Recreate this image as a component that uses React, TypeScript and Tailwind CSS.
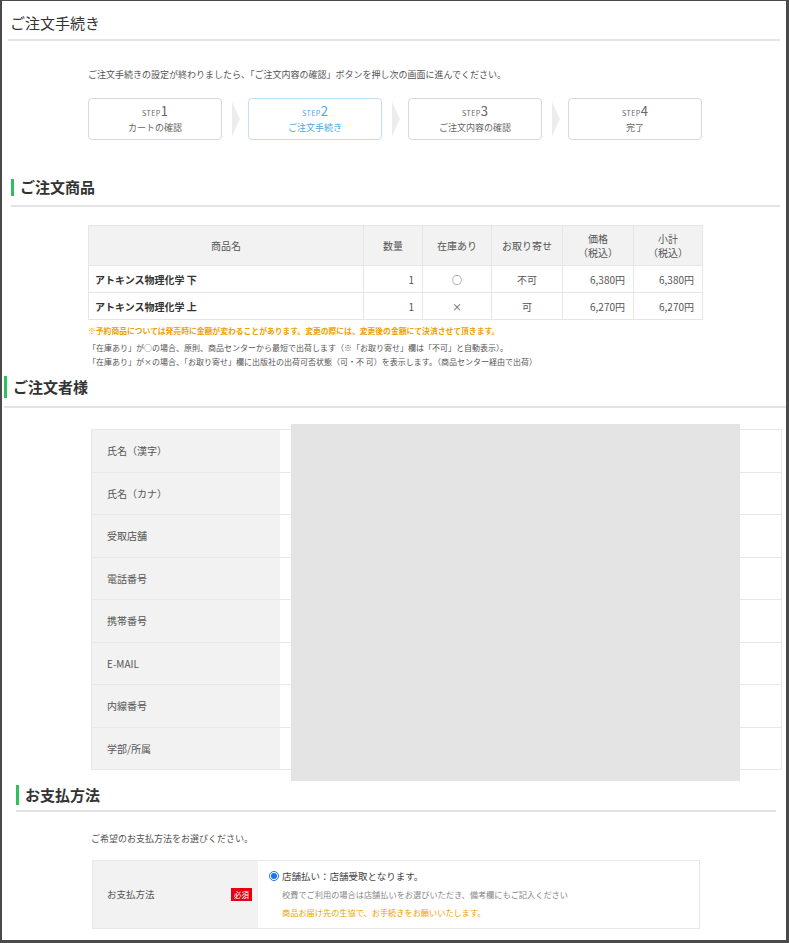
const steps = [
    { no: "1", label: "カートの確認", active: false },
    { no: "2", label: "ご注文手続き", active: true },
    { no: "3", label: "ご注文内容の確認", active: false },
    { no: "4", label: "完了", active: false },
];

const items = [
    { name: "アトキンス物理化学 下", qty: 1, stock: "○", order: "不可", price: "6,380円", sub: "6,380円" },
    { name: "アトキンス物理化学 上", qty: 1, stock: "×", order: "可", price: "6,270円", sub: "6,270円" },
];

const fields = ["氏名（漢字）", "氏名（カナ）", "受取店舗", "電話番号", "携帯番号", "E-MAIL", "内線番号", "学部/所属"];

const Chevron = () => (
    <svg width="26" height="42" viewBox="0 0 26 42" className="shrink-0">
        <polygon points="10,4 18,21 10,38" fill="#ececec" />
    </svg>
);

const Heading = ({ title, barH, className }: { title: string; barH: string; className: string }) => (
    <div className={`flex items-center gap-[6px] border-b-2 border-[#e3e3e3] ${className}`}>
        <span className={`w-[3px] ${barH} bg-[#2fbf5f]`} />
        <span className="text-[15px] leading-[20px] font-bold text-[#333]">{title}</span>
    </div>
);

const App = () => {
    return (
        <div className="w-[789px] h-[943px] box-border overflow-hidden bg-white border-t border-l-2 border-r-[3px] border-b-[3px] border-[#4a4a4a] font-['Noto_Sans_CJK_JP',sans-serif] text-[#444]">
            {/* page title */}
            <div className="ml-[6px] mr-[6px] pt-[12px] pb-[7px] pl-[2px] border-b-2 border-[#e5e5e5]">
                <h1 className="text-[15px] leading-[19px] text-[#333]">ご注文手続き</h1>
            </div>

            <p className="ml-[86px] mt-[27px] text-[9px] leading-[14px] text-[#555]">
                ご注文手続きの設定が終わりましたら、「ご注文内容の確認」ボタンを押し次の画面に進んでください。
            </p>

            {/* steps */}
            <div className="ml-[86px] mt-[16px] flex items-center">
                {steps.map((s, i) => (
                    <div key={s.no} className="flex items-center">
                        <div
                            className={`w-[134px] h-[42px] rounded-[4px] border flex flex-col items-center justify-center ${
                                s.active ? "border-[#bfe1f7] text-[#4aa8e8]" : "border-[#d9d9d9] text-[#666]"
                            }`}
                        >
                            <div className="text-[7px] leading-[14px] tracking-[0.5px]">
                                STEP<span className="text-[13px] tracking-normal">{s.no}</span>
                            </div>
                            <div className="text-[9px] leading-[13px] mt-[1px]">{s.label}</div>
                        </div>
                        {i < steps.length - 1 && <Chevron />}
                    </div>
                ))}
            </div>

            {/* order items */}
            <Heading title="ご注文商品" barH="h-[17px]" className="ml-[9px] mr-[6px] mt-[37px] pb-[8px]" />

            <table className="ml-[86px] mt-[18px] w-[615px] border-collapse text-[10px] text-[#555]">
                <thead>
                    <tr className="h-[40px] bg-[#f2f2f2]">
                        <th className="w-[275px] border border-[#e6e6e6] font-normal">商品名</th>
                        <th className="w-[59px] border border-[#e6e6e6] font-normal">数量</th>
                        <th className="w-[69px] border border-[#e6e6e6] font-normal">在庫あり</th>
                        <th className="w-[71px] border border-[#e6e6e6] font-normal">お取り寄せ</th>
                        <th className="w-[71px] border border-[#e6e6e6] font-normal leading-[14px]">価格<br />（税込）</th>
                        <th className="border border-[#e6e6e6] font-normal leading-[14px]">小計<br />（税込）</th>
                    </tr>
                </thead>
                <tbody>
                    {items.map((it) => (
                        <tr key={it.name} className="h-[27px]">
                            <td className="border border-[#e6e6e6] pl-[6px] font-bold text-[#333]">{it.name}</td>
                            <td className="border border-[#e6e6e6] text-right pr-[8px]">{it.qty}</td>
                            <td className="border border-[#e6e6e6] text-center">{it.stock}</td>
                            <td className="border border-[#e6e6e6] text-center">{it.order}</td>
                            <td className="border border-[#e6e6e6] text-right pr-[8px]">{it.price}</td>
                            <td className="border border-[#e6e6e6] text-right pr-[8px]">{it.sub}</td>
                        </tr>
                    ))}
                </tbody>
            </table>

            <div className="ml-[86px] mt-[4px] text-[8px] leading-[14px]">
                <p className="font-bold text-[7.8px] text-[#f0a000]">
                    ※予約商品については発売時に金額が変わることがあります。変更の際には、変更後の金額にて決済させて頂きます。
                </p>
                <p className="mt-[3px] text-[#555]">
                    「在庫あり」が○の場合、原則、商品センターから最短で出荷します（※「お取り寄せ」欄は「不可」と自動表示）。
                </p>
                <p className="text-[#555]">
                    「在庫あり」が×の場合、「お取り寄せ」欄に出版社の出荷可否状態（可・不 可）を表示します。（商品センター経由で出荷）
                </p>
            </div>

            {/* customer */}
            <Heading title="ご注文者様" barH="h-[22px]" className="ml-[2px] mt-[7px] pb-[8px]" />

            <div className="relative ml-[89px] mt-[21px] w-[691px]">
                <div className="border border-[#e8e8e8] border-b-0">
                    {fields.map((f) => (
                        <div key={f} className="flex h-[42.5px] border-b border-[#e8e8e8]">
                            <div className="w-[188px] bg-[#f2f2f2] pl-[15px] flex items-center text-[10px] text-[#555]">{f}</div>
                            <div className="flex-1" />
                        </div>
                    ))}
                </div>
                {/* redacted block */}
                <div className="absolute left-[200px] top-[-5px] w-[449px] h-[357px] bg-[#e5e4e5]" />
            </div>

            {/* payment */}
            <Heading title="お支払方法" barH="h-[20px]" className="ml-[14px] mr-[10px] mt-[15px] pb-[5px]" />

            <p className="ml-[89px] mt-[20px] text-[9px] leading-[14px] text-[#555]">ご希望のお支払方法をお選びください。</p>

            <div className="ml-[90px] mt-[14px] w-[608px] h-[69px] flex border border-[#e8e8e8]">
                <div className="w-[165px] bg-[#f2f2f2] flex items-center justify-between pl-[14px] pr-[6px]">
                    <span className="text-[9.5px] text-[#555]">お支払方法</span>
                    <span className="bg-[#e50012] text-white text-[7.5px] leading-[13px] px-[3px]">必須</span>
                </div>
                <div className="flex-1 pl-[11px] pt-[6px] leading-[18px]">
                    <div className="flex items-center gap-[3px] text-[9.5px] text-[#444]">
                        <span className="w-[10px] h-[10px] rounded-full border border-[#1a73e8] flex items-center justify-center">
                            <span className="w-[6px] h-[6px] rounded-full bg-[#1a73e8]" />
                        </span>
                        <span>店舗払い：店舗受取となります。</span>
                    </div>
                    <div className="pl-[13px] text-[8.2px] text-[#888]">校費でご利用の場合は店舗払いをお選びいただき、備考欄にもご記入ください</div>
                    <div className="pl-[13px] text-[8.2px] text-[#f0a000]">商品お届け先の生協で、お手続きをお願いいたします。</div>
                </div>
            </div>
        </div>
    );
};

export default App;
